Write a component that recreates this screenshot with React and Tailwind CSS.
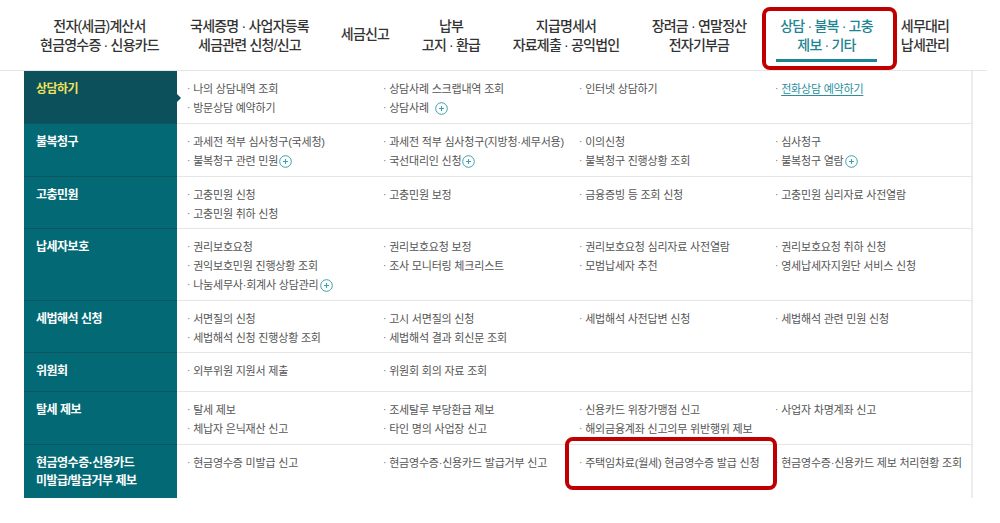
import React from "react";

const font = { fontFamily: '"Liberation Sans", "Noto Sans CJK KR", "Noto Sans", sans-serif' };

const navItems = [
  { lines: ["전자(세금)계산서", "현금영수증 · 신용카드"], w: "w-[149px]" },
  { lines: ["국세증명 · 사업자등록", "세금관련 신청/신고"], w: "w-[151px]" },
  { lines: ["세금신고"], w: "w-[80px]" },
  { lines: ["납부", "고지 · 환급"], w: "w-[92px]" },
  { lines: ["지급명세서", "자료제출 · 공익법인"], w: "w-[138px]" },
  { lines: ["장려금 · 연말정산", "전자기부금"], w: "w-[128px]" },
  { lines: ["상담 · 불복 · 고충", "제보 · 기타"], w: "w-[127px]", active: true },
  { lines: ["세무대리", "납세관리"], w: "w-[70px]" },
];

const rows = [
  {
    label: ["상담하기"],
    active: true,
    h: "h-[53px]",
    cols: [
      ["나의 상담내역 조회", "방문상담 예약하기"],
      ["상담사례 스크랩내역 조회", { t: "상담사례", plus: true, space: true }],
      ["인터넷 상담하기"],
      [{ t: "전화상담 예약하기", link: true }],
    ],
  },
  {
    label: ["불복청구"],
    h: "h-[53px]",
    cols: [
      ["과세전 적부 심사청구(국세청)", { t: "불복청구 관련 민원", plus: true }],
      ["과세전 적부 심사청구(지방청·세무서용)", { t: "국선대리인 신청", plus: true }],
      ["이의신청", "불복청구 진행상황 조회"],
      ["심사청구", { t: "불복청구 열람", plus: true }],
    ],
  },
  {
    label: ["고충민원"],
    h: "h-[52px]",
    cols: [
      ["고충민원 신청", "고충민원 취하 신청"],
      ["고충민원 보정"],
      ["금융증빙 등 조회 신청"],
      ["고충민원 심리자료 사전열람"],
    ],
  },
  {
    label: ["납세자보호"],
    h: "h-[72px]",
    cols: [
      ["권리보호요청", "권익보호민원 진행상황 조회", { t: "나눔세무사·회계사 상담관리", plus: true }],
      ["권리보호요청 보정", "조사 모니터링 체크리스트"],
      ["권리보호요청 심리자료 사전열람", "모범납세자 추천"],
      ["권리보호요청 취하 신청", "영세납세자지원단 서비스 신청"],
    ],
  },
  {
    label: ["세법해석 신청"],
    h: "h-[52px]",
    cols: [
      ["서면질의 신청", "세법해석 신청 진행상황 조회"],
      ["고시 서면질의 신청", "세법해석 결과 회신문 조회"],
      ["세법해석 사전답변 신청"],
      ["세법해석 관련 민원 신청"],
    ],
  },
  {
    label: ["위원회"],
    h: "h-[39px]",
    cols: [["외부위원 지원서 제출"], ["위원회 회의 자료 조회"], [], []],
  },
  {
    label: ["탈세 제보"],
    h: "h-[53px]",
    cols: [
      ["탈세 제보", "체납자 은닉재산 신고"],
      ["조세탈루 부당환급 제보", "타인 명의 사업장 신고"],
      ["신용카드 위장가맹점 신고", "해외금융계좌 신고의무 위반행위 제보"],
      ["사업자 차명계좌 신고"],
    ],
  },
  {
    label: ["현금영수증·신용카드", "미발급/발급거부 제보"],
    h: "h-[53px]",
    last: true,
    cols: [
      ["현금영수증 미발급 신고"],
      ["현금영수증·신용카드 발급거부 신고"],
      ["주택임차료(월세) 현금영수증 발급 신청"],
      ["현금영수증·신용카드 제보 처리현황 조회"],
    ],
  },
];

const PlusIcon = () => (
  <svg width="13" height="13" viewBox="0 0 13 13" className="inline-block align-[-3px]">
    <circle cx="6.5" cy="6.5" r="5.8" fill="none" stroke="#3f9faa" strokeWidth="1" />
    <path d="M4 6.5h5M6.5 4v5" stroke="#3f9faa" strokeWidth="1.1" />
  </svg>
);

const Item = ({ item }) => {
  const it = typeof item === "string" ? { t: item } : item;
  return (
    <li className="h-[19px] leading-[19px] whitespace-nowrap flex items-center">
      <span className="text-[#777] mr-[3px] -mt-[3px] text-[10px]">·</span>
      {it.link ? (
        <a href="#" className="text-[#2a8f9c] underline underline-offset-2">
          {it.t}
        </a>
      ) : (
        <span>{it.t}</span>
      )}
      {it.plus && (
        <span className={it.space ? "ml-[6px]" : "ml-[1px]"}>
          <PlusIcon />
        </span>
      )}
    </li>
  );
};

export default function App() {
  return (
    <div className="relative w-[1000px] h-[523px] bg-white overflow-hidden" style={font}>
      {/* top menu */}
      <nav className="w-[987px] h-[71px] border-b border-[#e6e6e6] flex pl-[25px]">
        {navItems.map((n, i) => (
          <div
            key={i}
            className={`${n.w} shrink-0 flex justify-center ${n.lines.length === 1 ? "items-center pb-[2px]" : "pt-[17px]"}`}
          >
            <div
              className={`text-center text-[14px] font-medium leading-[19px] tracking-[-0.8px] whitespace-nowrap ${
                n.active ? "text-[#1d8593] border-b-[3px] border-[#1d8593] px-[4px] pb-[3px] h-[45px]" : "text-[#333]"
              }`}
            >
              {n.lines.map((l, j) => (
                <div key={j}>{l}</div>
              ))}
            </div>
          </div>
        ))}
      </nav>

      {/* sub menu table */}
      <div className="ml-[24px] w-[949px]">
        {rows.map((r, i) => (
          <div key={i} className={`relative flex ${r.h}`}>
            <div
              className={`w-[153px] shrink-0 pl-[12px] pt-[9px] ${r.active ? "bg-[#0b505a]" : "bg-[#036a75]"} ${
                r.last ? "" : "border-b border-[#0b5660]"
              }`}
            >
              {r.label.map((l, j) => (
                <div
                  key={j}
                  className={`text-[12px] font-bold tracking-[-0.5px] ${r.label.length > 1 ? "leading-[18px]" : "leading-[19px]"} ${
                    r.active ? "text-[#f2e15c]" : "text-white"
                  }`}
                >
                  {l}
                </div>
              ))}
            </div>
            {r.active && (
              <div className="absolute left-[153px] top-[23px] w-0 h-0 border-y-[4px] border-y-transparent border-l-[4px] border-l-[#0b505a]" />
            )}
            <div
              className={`flex-1 grid grid-cols-4 pl-[10px] pt-[9px] border-r-2 border-r-[#ececec] ${
                r.last ? "" : "border-b border-b-[#e6e6e6]"
              }`}
            >
              {r.cols.map((c, j) => (
                <ul key={j} className="text-[11px] text-[#555] tracking-[-0.2px]">
                  {c.map((it, k) => (
                    <Item key={k} item={it} />
                  ))}
                </ul>
              ))}
            </div>
          </div>
        ))}
      </div>

      {/* annotation highlights */}
      <div className="absolute left-[762px] top-[7px] w-[135px] h-[63px] border-[4px] border-[#c00000] rounded-[8px]" />
      <div className="absolute left-[565px] top-[437px] w-[212px] h-[53px] border-[4px] border-[#c00000] rounded-[8px]" />
    </div>
  );
}
